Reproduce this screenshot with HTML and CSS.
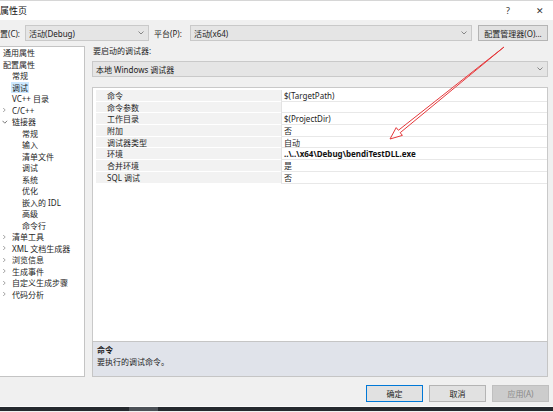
FILE: index.html
```html
<!DOCTYPE html>
<html lang="zh">
<head>
<meta charset="utf-8">
<title>属性页</title>
<link rel="stylesheet" href="styles.css">
</head>
<body>
<div class="dialog">
  <div class="titlebar">
    <span class="title">属性页</span>
    <span class="tb-help">?</span>
    <span class="tb-close">✕</span>
  </div>

  <div class="config">
    <span class="cfg-label">置(C):</span>
    <div class="combo combo-cfg"><span>活动(Debug)</span><svg class="chev" width="6" height="4" viewBox="0 0 6 4"><path d="M0.5 0.5 L3 3 L5.5 0.5" fill="none" stroke="#7a7a7a" stroke-width="0.9"/></svg></div>
    <span class="plat-label">平台(P):</span>
    <div class="combo combo-plat"><span>活动(x64)</span><svg class="chev" width="6" height="4" viewBox="0 0 6 4"><path d="M0.5 0.5 L3 3 L5.5 0.5" fill="none" stroke="#7a7a7a" stroke-width="0.9"/></svg></div>
    <div class="btn btn-cfgmgr">配置管理器(O)...</div>
  </div>

  <div class="main">
    <div class="tree">
      <div class="ti l0">通用属性</div>
      <div class="ti l0">配置属性</div>
      <div class="ti l1">常规</div>
      <div class="ti l1"><span class="sel">调试</span></div>
      <div class="ti l1">VC++ 目录</div>
      <div class="ti l1x"><svg class="exp" width="9" height="6" viewBox="0 0 9 6"><path d="M1.2 1 L3.2 3 L1.2 5" fill="none" stroke="#8a8a8a" stroke-width="0.8"/></svg>C/C++</div>
      <div class="ti l1x"><svg class="exp" width="9" height="6" viewBox="0 0 9 6"><path d="M0.5 1.8 L2.8 4.2 L5.1 1.8" fill="none" stroke="#5a5a5a" stroke-width="0.8"/></svg>链接器</div>
      <div class="ti l2">常规</div>
      <div class="ti l2">输入</div>
      <div class="ti l2">清单文件</div>
      <div class="ti l2">调试</div>
      <div class="ti l2">系统</div>
      <div class="ti l2">优化</div>
      <div class="ti l2">嵌入的 IDL</div>
      <div class="ti l2">高级</div>
      <div class="ti l2">命令行</div>
      <div class="ti l1x"><svg class="exp" width="9" height="6" viewBox="0 0 9 6"><path d="M1.2 1 L3.2 3 L1.2 5" fill="none" stroke="#8a8a8a" stroke-width="0.8"/></svg>清单工具</div>
      <div class="ti l1x"><svg class="exp" width="9" height="6" viewBox="0 0 9 6"><path d="M1.2 1 L3.2 3 L1.2 5" fill="none" stroke="#8a8a8a" stroke-width="0.8"/></svg>XML 文档生成器</div>
      <div class="ti l1x"><svg class="exp" width="9" height="6" viewBox="0 0 9 6"><path d="M1.2 1 L3.2 3 L1.2 5" fill="none" stroke="#8a8a8a" stroke-width="0.8"/></svg>浏览信息</div>
      <div class="ti l1x"><svg class="exp" width="9" height="6" viewBox="0 0 9 6"><path d="M1.2 1 L3.2 3 L1.2 5" fill="none" stroke="#8a8a8a" stroke-width="0.8"/></svg>生成事件</div>
      <div class="ti l1x"><svg class="exp" width="9" height="6" viewBox="0 0 9 6"><path d="M1.2 1 L3.2 3 L1.2 5" fill="none" stroke="#8a8a8a" stroke-width="0.8"/></svg>自定义生成步骤</div>
      <div class="ti l1x"><svg class="exp" width="9" height="6" viewBox="0 0 9 6"><path d="M1.2 1 L3.2 3 L1.2 5" fill="none" stroke="#8a8a8a" stroke-width="0.8"/></svg>代码分析</div>
    </div>

    <div class="right">
      <div class="dbg-label">要启动的调试器:</div>
      <div class="combo combo-dbg"><span>本地 Windows 调试器</span><svg class="chev" width="6" height="4" viewBox="0 0 6 4"><path d="M0.5 0.5 L3 3 L5.5 0.5" fill="none" stroke="#7a7a7a" stroke-width="0.9"/></svg></div>
      <div class="grid">
        <div class="row"><div class="name">命令</div><div class="val">$(TargetPath)</div></div>
        <div class="row"><div class="name">命令参数</div><div class="val"></div></div>
        <div class="row"><div class="name">工作目录</div><div class="val">$(ProjectDir)</div></div>
        <div class="row"><div class="name">附加</div><div class="val">否</div></div>
        <div class="row"><div class="name">调试器类型</div><div class="val">自动</div></div>
        <div class="row"><div class="name">环境</div><div class="val bold">..\..\x64\Debug\bendiTestDLL.exe</div></div>
        <div class="row"><div class="name">合并环境</div><div class="val">是</div></div>
        <div class="row"><div class="name">SQL 调试</div><div class="val">否</div></div>
      </div>
      <div class="desc">
        <div class="desc-title">命令</div>
        <div class="desc-text">要执行的调试命令。</div>
      </div>
    </div>
  </div>

  <div class="buttons">
    <div class="btn btn-ok">确定</div>
    <div class="btn">取消</div>
    <div class="btn btn-dis">应用(A)</div>
  </div>

  <div class="taskbar"><span class="task-item"></span></div>

  <svg class="arrow" width="553" height="412" viewBox="0 0 553 412">
    <polygon points="504,47 400.2,132.7 402.4,135.4 390,139 396.2,127.6 398.4,130.3" fill="#ffffff" fill-opacity="0.6" stroke="#e5383b" stroke-width="1" stroke-linejoin="miter"/>
  </svg>
</div>
</body>
</html>
```

FILE: styles.css
```css
* { box-sizing: border-box; }

html, body {
  margin: 0;
  padding: 0;
}

body {
  width: 553px;
  height: 412px;
  overflow: hidden;
  background: #f0f0f0;
  font-family: "Noto Sans", "Noto Sans CJK SC", sans-serif;
  font-size: 8px;
  color: #1e1e1e;
}

.dialog {
  position: relative;
  width: 553px;
  height: 412px;
  display: flex;
  flex-direction: column;
}

.titlebar {
  height: 20px;
  background: #ffffff;
  border-top: 1px solid #d6d6d6;
  display: flex;
  align-items: center;
  font-size: 9px;
  color: #111;
}

.title {
  flex: 1;
  padding-left: 0;
}

.tb-help {
  width: 30px;
  font-size: 9px;
  color: #333;
}

.tb-close {
  width: 17px;
  font-size: 9px;
  color: #333;
}

.config {
  margin-top: 5px;
  height: 16px;
  display: flex;
  align-items: stretch;
}

.cfg-label {
  width: 25px;
  display: flex;
  align-items: center;
}

.plat-label {
  width: 41px;
  padding-left: 5px;
  display: flex;
  align-items: center;
}

.combo {
  display: flex;
  align-items: center;
  justify-content: space-between;
  background: #e5e5e5;
  border: 1px solid #c9c9c9;
  padding: 0 4px 0 3px;
  color: #222;
}

.combo-cfg { width: 124px; }
.combo-plat { width: 282px; }
.combo-dbg { width: 456px; height: 16px; }

.chev { flex: none; }

.btn {
  display: flex;
  align-items: center;
  justify-content: center;
  background: #e1e1e1;
  border: 1px solid #b4b4b4;
  color: #1e1e1e;
}

.btn-cfgmgr {
  margin-left: 6px;
  width: 70px;
}

.main {
  margin-top: 5px;
  height: 331px;
  display: flex;
}

.tree {
  width: 85px;
  background: #ffffff;
  border: 1px solid #c4c4c4;
  border-left: none;
  overflow: hidden;
}

.ti {
  height: 11.5px;
  line-height: 11.5px;
  white-space: nowrap;
  color: #1e1e1e;
}

.l0 { padding-left: 3px; }
.l1 { padding-left: 12px; }
.l2 { padding-left: 22px; }
.l1x { padding-left: 2px; display: flex; align-items: center; }

.exp {
  flex: none;
  margin-right: 1px;
}

.sel {
  background: #cce8ff;
  padding: 0 1px;
  margin-left: -1px;
  display: inline-block;
  height: 11.5px;
}

.right {
  margin-left: 7px;
  width: 456px;
  display: flex;
  flex-direction: column;
}

.dbg-label {
  height: 15px;
  line-height: 9px;
  padding-left: 1px;
}

.grid {
  margin-top: 10px;
  height: 254px;
  background: #ffffff;
  border: 1px solid #c9c9c9;
  border-bottom: none;
  padding: 2px 0 0 3px;
}

.row {
  height: 11.7px;
  display: flex;
}

.name {
  width: 185px;
  background: #f2f2f2;
  border-bottom: 1px solid #ffffff;
  padding-left: 11px;
  line-height: 11px;
  color: #1e1e1e;
}

.val {
  flex: 1;
  border-left: 1px solid #e3e3e3;
  border-bottom: 1px solid #e8e8e8;
  padding-left: 2px;
  line-height: 11px;
}

.bold {
  font-weight: 700;
  color: #111;
}

.desc {
  height: 36px;
  background: #e0e3ea;
  border: 1px solid #c5c5c5;
  padding: 2px 4px;
}

.desc-title {
  font-weight: 700;
  line-height: 11.5px;
}

.desc-text {
  line-height: 11.5px;
}

.buttons {
  margin-top: 8px;
  height: 17px;
  display: flex;
  justify-content: flex-end;
  gap: 6px;
  padding-right: 4px;
}

.buttons .btn {
  width: 57px;
}

.btn-ok {
  border-color: #0078d7;
}

.btn-dis {
  background: #cccccc;
  border-color: #bfbfbf;
  color: #8a8a8a;
}

.taskbar {
  margin-top: 4px;
  height: 5px;
  border-top: 1px solid #fafafa;
  background: #25292e;
  position: relative;
}

.task-item {
  position: absolute;
  left: 129px;
  top: 0;
  width: 29px;
  height: 4px;
  background: #4c5157;
}

.arrow {
  position: absolute;
  left: 0;
  top: 0;
  pointer-events: none;
}
```
